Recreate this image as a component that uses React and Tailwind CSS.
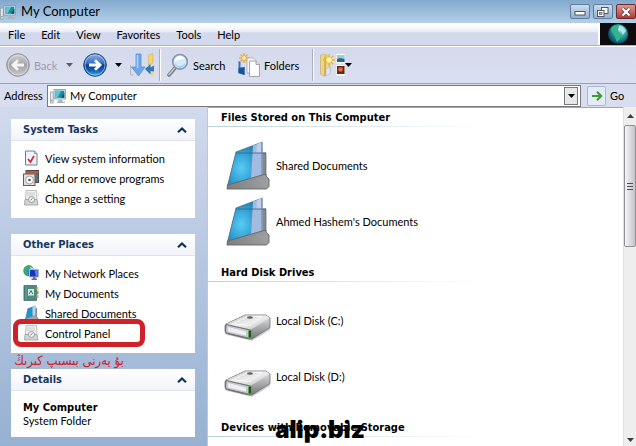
import { useState } from "react";

const menuItems = ["File", "Edit", "View", "Favorites", "Tools", "Help"];

const ComputerIcon = ({ className }) => (
  <svg viewBox="0 0 16 16" className={className} aria-hidden="true">
    <rect x="0.5" y="4" width="2.6" height="11" fill="#e8ecef" stroke="#8c979f" strokeWidth="0.7" />
    <path d="M1.2 12.6h1.2" stroke="#41b649" strokeWidth="1.2" />
    <rect x="4" y="1.5" width="11.5" height="9.5" fill="#dfe7ec" stroke="#8798a3" strokeWidth="0.8" />
    <rect x="5.2" y="2.7" width="9.1" height="7.1" fill="#1b8aa3" />
    <path d="M5.2 2.7h6L7.5 9.8H5.2z" fill="#5cc7d4" />
    <path d="M11 9.8l3.3-5v5z" fill="#0c4f70" />
    <path d="M8.5 11.4h3.4l1 2.4h2v1.2h-8v-1.2h1.2z" fill="#a9b6be" />
  </svg>
);

const Arrow = ({ className }) => (
  <svg viewBox="0 0 7 4" className={className} aria-hidden="true">
    <path d="M0 0h7L3.5 4z" fill="currentColor" />
  </svg>
);

const BackIcon = () => (
  <svg viewBox="0 0 24 24" className="size-6" aria-hidden="true">
    <defs>
      <linearGradient id="backFill" x1="0" y1="0" x2="0" y2="1">
        <stop offset="0" stopColor="#d2d2d4" />
        <stop offset="0.5" stopColor="#a3a3a6" />
        <stop offset="1" stopColor="#c9c9cc" />
      </linearGradient>
    </defs>
    <circle cx="12" cy="12" r="11.3" fill="url(#backFill)" stroke="#8f9093" />
    <circle cx="12" cy="12" r="9.8" fill="none" stroke="#dcdcdf" strokeWidth="0.8" />
    <path d="M18 12H7.5M12 7.2L7 12l5 4.8" fill="none" stroke="#f4f4f6" strokeWidth="2.8" />
  </svg>
);

const ForwardIcon = () => (
  <svg viewBox="0 0 24 24" className="size-6" aria-hidden="true">
    <defs>
      <linearGradient id="forwardFill" x1="0" y1="0" x2="0" y2="1">
        <stop offset="0" stopColor="#8fb4e3" />
        <stop offset="0.42" stopColor="#3a6fc0" />
        <stop offset="0.5" stopColor="#0b3a94" />
        <stop offset="0.75" stopColor="#1560b5" />
        <stop offset="1" stopColor="#38c4ee" />
      </linearGradient>
    </defs>
    <circle cx="12" cy="12" r="11.3" fill="url(#forwardFill)" stroke="#27457c" />
    <circle cx="12" cy="12" r="10" fill="none" stroke="#a9cdf0" strokeWidth="0.7" />
    <path d="M6 12h10.5M12 7.2l5 4.8-5 4.8" fill="none" stroke="#fff" strokeWidth="2.8" />
  </svg>
);

const UpIcon = () => (
  <svg viewBox="0 0 25 24" className="h-6 w-[25px]" aria-hidden="true">
    <path d="M0.5 12v10h3" fill="none" stroke="#b3b6bd" />
    <path d="M18.5 2L23 0.5V10l-4.5 2z" fill="#f1d47c" stroke="#d7b14e" strokeWidth="0.6" />
    <path d="M20 18h3.5v5L20 21z" fill="#f1d47c" />
    <path d="M15 16l5.5-5v3.5l3.5-2v6l-3.5-.5v3.5z" fill="#2f7ab9" />
    <path d="M6 1h5v13h4L8.5 23 1.5 14H6z" fill="#6ea5e6" stroke="#5b90d6" strokeWidth="0.8" />
    <path d="M7.5 2v13" stroke="#b9d8f8" strokeWidth="1.5" />
  </svg>
);

const SearchIcon = () => (
  <svg viewBox="0 0 22 24" className="h-6 w-[22px]" aria-hidden="true">
    <path d="M8 15l-6 7" stroke="#777d86" strokeWidth="3.6" strokeLinecap="round" />
    <path d="M7.6 15l-5.6 6.5" stroke="#c8ccd2" strokeWidth="1.4" strokeLinecap="round" />
    <circle cx="13" cy="8.8" r="7.3" fill="#d4e9fa" stroke="#8796a8" strokeWidth="1.6" />
    <path d="M7.5 8.5a5.6 5.6 0 0 1 10.4-2.6C14.5 6 10 7 7.5 8.5z" fill="#fff" />
    <path d="M8 10.5c3 3.5 7 3.5 10.5-.5-.8 6-9 6.8-10.5.5z" fill="#a5cdf0" />
  </svg>
);

const FoldersIcon = () => (
  <svg viewBox="0 0 22 24" className="h-6 w-[22px]" aria-hidden="true">
    <path d="M0.5 8l2 1v7l4-2v8l-6-2z" fill="#2a78bd" />
    <path d="M0.5 15l6-1v8l-6-2z" fill="#15559c" />
    <path d="M4 5h7v5H4z" fill="#cfd6de" />
    <path d="M6 0v10M1 5h10M2.5 1.5l7 7M9.5 1.5l-7 7" stroke="#efa63f" strokeWidth="1.3" />
    <circle cx="6" cy="5" r="2.3" fill="#fff0a0" stroke="#e7a13c" strokeWidth="0.7" />
    <path d="M9 5h6.5L18 7.5V20H9z" fill="#f7f7f8" stroke="#a6a6aa" strokeWidth="0.8" />
    <path d="M11.5 8H18l3.5 3.5v12h-10z" fill="#fff" stroke="#8f8f93" strokeWidth="0.8" />
    <path d="M18 8v3.5h3.5" fill="#e3e3e6" stroke="#8f8f93" strokeWidth="0.8" />
  </svg>
);

const ViewsIcon = () => (
  <svg viewBox="0 0 25 24" className="h-6 w-[25px]" aria-hidden="true">
    <path d="M0.5 2.5L4 1l6 3v16l-6 3-3.5-2z" fill="#ecd48d" stroke="#c8a456" strokeWidth="0.6" />
    <path d="M4 4l2 1v18l-2 .5z" fill="#d3b059" />
    <path d="M6 16l4-2v7l-4 2z" fill="#dfe8f3" stroke="#9bb0c8" strokeWidth="0.5" />
    <path d="M9 1v12M3 7h12M4.8 2.8l8.4 8.4M13.2 2.8l-8.4 8.4" stroke="#f0b629" strokeWidth="1.3" />
    <circle cx="9" cy="7" r="3" fill="#fff7a8" stroke="#efbf35" strokeWidth="0.6" />
    <rect x="16.5" y="1" width="8" height="9.5" fill="#fff" />
    <rect x="17" y="2" width="7.5" height="7" fill="#8fd0e6" />
    <path d="M17 6l3-1 4.5 1v3H17z" fill="#2c6a7c" />
    <rect x="16.5" y="12" width="8" height="10.5" fill="#fff" />
    <rect x="17" y="13" width="7.5" height="8" fill="#6f2412" />
    <circle cx="20.5" cy="16.5" r="2.3" fill="#d8703a" />
  </svg>
);

const GlobeIcon = () => (
  <svg viewBox="0 0 22 22" className="size-[22px]" aria-hidden="true">
    <defs>
      <radialGradient id="globeFill" cx="0.6" cy="0.35" r="0.65">
        <stop offset="0" stopColor="#7fd9e4" />
        <stop offset="0.6" stopColor="#1c8c8f" />
        <stop offset="1" stopColor="#0b3f63" />
      </radialGradient>
    </defs>
    <circle cx="11" cy="11" r="10" fill="url(#globeFill)" />
    <path d="M5 4c3-3 6-1.5 7 0l-1 4 3 3-1 5-3 3c-2-3-1-5-3-7S3 7 5 4z" fill="#35b58c" />
    <path d="M12 2.5c3 0 6 2.5 7 5.5l-3 4-2-4-3-1z" fill="#c8eef2" opacity="0.8" />
  </svg>
);

const GoIcon = () => (
  <svg viewBox="0 0 12 12" className="size-3" aria-hidden="true">
    <path d="M1 6h9M6 1.8L10.2 6 6 10.2" fill="none" stroke="#3d9a35" strokeWidth="2" />
  </svg>
);

const ChevronUp = () => (
  <svg viewBox="0 0 10 6" className="h-1.5 w-2.5" aria-hidden="true">
    <path d="M1 5.2L5 1.5l4 3.7" fill="none" stroke="#0f3157" strokeWidth="2.2" />
  </svg>
);

const InfoIcon = () => (
  <svg viewBox="0 0 16 16" className="size-4" aria-hidden="true">
    <path d="M2.5 1h9L14 3.5V15H2.5z" fill="#edf3fa" stroke="#6580a3" />
    <path d="M11.5 1v2.5H14" fill="#b6c8dd" stroke="#6580a3" strokeWidth="0.7" />
    <path d="M5 9l2.5 3L11 6" fill="none" stroke="#cf2a2d" strokeWidth="1.7" />
  </svg>
);

const ProgramsIcon = () => (
  <svg viewBox="0 0 16 16" className="size-4" aria-hidden="true">
    <rect x="3" y="0.5" width="12.5" height="12" fill="#8d8378" stroke="#4f4a48" />
    <path d="M3 2h12.5" stroke="#c54d3a" strokeWidth="1.5" />
    <path d="M12.5 3H15v9h-2.5z" fill="#5b6c86" />
    <rect x="0.5" y="4" width="11.5" height="11.5" fill="#e1e2df" stroke="#605d58" />
    <circle cx="6.5" cy="10" r="4" fill="#fafafa" stroke="#8b8b86" strokeWidth="0.8" />
    <circle cx="6.5" cy="10" r="1.3" fill="#4e5156" />
  </svg>
);

const SettingIcon = () => (
  <svg viewBox="0 0 16 16" className="size-4" aria-hidden="true">
    <path d="M3 0.5h10.5l.5 9H2.5z" fill="#f1f1f1" stroke="#b0b1b4" strokeWidth="0.8" />
    <path d="M4.5 3h8M4.5 5h8" stroke="#a3a5a8" strokeDasharray="1 1" />
    <path d="M2 9.5h12l1 5.5H1.5z" fill="#d3d4d6" stroke="#9a9c9f" strokeWidth="0.8" />
    <circle cx="8.5" cy="9.5" r="3" fill="#f6f6f6" stroke="#8a8c90" strokeWidth="0.9" />
    <path d="M7.5 10l2-1.5" stroke="#67696d" />
  </svg>
);

const NetworkIcon = () => (
  <svg viewBox="0 0 16 16" className="size-4" aria-hidden="true">
    <circle cx="5.8" cy="5.8" r="5.5" fill="#2b8fb4" />
    <path d="M2 2c3-2.5 5-2 6-1L6.5 4 3 5.5l2 3-1 2C1 9 0 5 2 2z" fill="#42a965" />
    <path d="M7 2l3 1 .5 2H8z" fill="#bfe6ea" />
    <rect x="6.5" y="4.5" width="9" height="7.5" fill="#1a34b8" stroke="#b5bfca" strokeWidth="0.9" />
    <path d="M11.5 5.2l3.3-.1v6h-2z" fill="#5b83ea" />
    <path d="M10 12h2.5v1.5H14V15H8.5v-1.5H10z" fill="#66717c" />
  </svg>
);

const NotebookIcon = () => (
  <svg viewBox="0 0 16 16" className="size-4" aria-hidden="true">
    <rect x="1" y="0.7" width="12.5" height="14.6" fill="#4f8b83" stroke="#2c5f5b" strokeWidth="0.8" />
    <path d="M3 1v14" stroke="#6aa59e" strokeWidth="0.9" />
    <rect x="5" y="4" width="6" height="6.5" fill="#d7e9dd" />
    <path d="M6.2 9L8 5.5 9.8 9" fill="none" stroke="#34766f" />
    <path d="M13.5 2h2v3h-2z" fill="#e4c653" />
    <path d="M13.5 6h2v3h-2z" fill="#5fae5b" />
    <path d="M13.5 10h2v3h-2z" fill="#d5b24a" />
  </svg>
);

const SharedIcon = () => (
  <svg viewBox="0 0 16 16" className="size-4" aria-hidden="true">
    <path d="M12 3h2v9l1 1v2.5H2z" fill="#84898f" />
    <path d="M4.5 3.5l8-3v11L2 15z" fill="#2691c9" />
    <path d="M9.5 1.8l3-1.3v11l-3 1z" fill="#b7d5ec" />
    <path d="M2 13.5l10.5-3L15 13v2.5H2z" fill="#a2a6aa" stroke="#74787c" strokeWidth="0.5" />
  </svg>
);

const FolderIcon = () => (
  <svg viewBox="0 0 48 52" className="h-[52px] w-12" aria-hidden="true">
    <defs>
      <radialGradient id="folderBlue" cx="0.4" cy="0.6" r="0.65">
        <stop offset="0" stopColor="#58cdf4" />
        <stop offset="0.6" stopColor="#2f9bd0" />
        <stop offset="1" stopColor="#1f76a8" />
      </radialGradient>
      <linearGradient id="folderGrey" x1="0" y1="0" x2="1" y2="0">
        <stop offset="0" stopColor="#7c7e80" />
        <stop offset="1" stopColor="#9fa0a1" />
      </linearGradient>
    </defs>
    <path d="M34 14h8v23l-8 2z" fill="#86888a" stroke="#5e6062" strokeWidth="0.7" />
    <path d="M12 13L38.5 3v34L3.5 47z" fill="url(#folderBlue)" stroke="#47677f" strokeWidth="0.8" />
    <path d="M29 6.6L38.5 3v34L27 40.2z" fill="#a4bbdf" />
    <path d="M33 5l5.5-2v11h-6z" fill="#c3cfe8" />
    <path d="M37 3.6l1.5-.6v34l-1.5.4z" fill="#8d9db6" />
    <path d="M12 14h30" stroke="#3f6a88" strokeWidth="0.9" />
    <path d="M3.5 46L40 35.5h2V37l3 3v7.5L42.5 50H3z" fill="url(#folderGrey)" stroke="#626466" strokeWidth="0.9" />
  </svg>
);

const DriveIcon = () => (
  <svg viewBox="0 0 48 52" className="h-[52px] w-12" aria-hidden="true">
    <defs>
      <linearGradient id="driveTop" x1="0" y1="0" x2="1" y2="1">
        <stop offset="0" stopColor="#c0c1c2" />
        <stop offset="0.5" stopColor="#ededed" />
        <stop offset="1" stopColor="#bcbdbe" />
      </linearGradient>
      <linearGradient id="driveSide" x1="0" y1="0" x2="0" y2="1">
        <stop offset="0" stopColor="#e5e6e6" />
        <stop offset="1" stopColor="#727476" />
      </linearGradient>
    </defs>
    <path d="M2 39l24 6 20-11v2L28 47 4 41z" fill="#b9babb" opacity="0.7" />
    <path d="M2 30l19-9h21l4 3v9.5L28 45h-3L2 39.5 1 37v-5z" fill="url(#driveSide)" stroke="#6b6d6f" strokeWidth="0.8" />
    <path d="M2.5 30L21 21.5h21l3.5 2.5L27 35.5z" fill="url(#driveTop)" />
    <path d="M8 30l16-7.5h14l-12 9z" fill="none" stroke="#fff" strokeWidth="0.7" />
    <ellipse cx="26" cy="23.5" rx="3" ry="1.3" fill="#606365" />
    <path d="M2 30.5L26 36v8.5L2.5 39l-1-2z" fill="#c6c7cb" stroke="#686a6c" strokeWidth="0.9" />
    <path d="M4 33l18 4.5v4l-18-4z" fill="#eeeef6" />
    <path d="M24.5 36.5l3-.5v7.5l-3 1z" fill="#2a4b28" stroke="#5fae50" strokeWidth="0.9" />
  </svg>
);

const systemTasks = [
  { label: "View system information", icon: InfoIcon },
  { label: "Add or remove programs", icon: ProgramsIcon },
  { label: "Change a setting", icon: SettingIcon },
];

const otherPlaces = [
  { label: "My Network Places", icon: NetworkIcon },
  { label: "My Documents", icon: NotebookIcon },
  { label: "Shared Documents", icon: SharedIcon },
  { label: "Control Panel", icon: SettingIcon, marked: true },
];

const sections = [
  {
    title: "Files Stored on This Computer",
    icon: FolderIcon,
    items: ["Shared Documents", "Ahmed Hashem's Documents"],
  },
  {
    title: "Hard Disk Drives",
    icon: DriveIcon,
    items: ["Local Disk (C:)", "Local Disk (D:)"],
  },
];

const Panel = ({ title, children }) => {
  const [open, setOpen] = useState(true);

  return (
    <section className="bg-white">
      <h2>
        <button
          type="button"
          aria-expanded={open}
          onClick={() => setOpen(!open)}
          className="flex h-[22px] w-full items-center justify-between border-b border-[#dfe5ef] bg-linear-to-b from-white to-[#f1f3f8] pr-2 pl-3 font-['DejaVu_Sans_Condensed','DejaVu_Sans',sans-serif] font-bold text-[#17365d]"
        >
          {title}
          <ChevronUp />
        </button>
      </h2>
      {open && children}
    </section>
  );
};

const TaskList = ({ items }) => (
  <ul className="px-3 pt-[7px] pb-2.5">
    {items.map(({ label, icon: Icon, marked }) => (
      <li key={label} className="relative">
        <a href="#" className="flex h-5 items-center gap-1.5 whitespace-nowrap">
          <Icon />
          {label}
        </a>
        {marked && (
          <span className="pointer-events-none absolute -top-1 -left-2.5 h-7 w-[132px] rounded-lg border-5 border-[#cf2228]" />
        )}
      </li>
    ))}
  </ul>
);

const SectionTitle = ({ children }) => (
  <div>
    <h2 className="flex h-[18px] items-center pl-[13px] font-['DejaVu_Sans_Condensed','DejaVu_Sans',sans-serif] font-bold whitespace-nowrap">
      {children}
    </h2>
    <div className="h-px w-2/3 bg-linear-to-r from-[#b9d3dc] to-white" />
  </div>
);

const Separator = () => (
  <div className="h-8 w-0.5 shrink-0 border-r border-l border-r-white border-l-[#a9adbd]" />
);

const App = () => {
  const [address, setAddress] = useState("My Computer");

  return (
    <div className="relative flex min-h-screen flex-col overflow-hidden bg-[#d8ddef] font-['Lato',sans-serif] text-[11px] leading-[13px] text-black">
      {/* Title bar */}
      <header className="flex h-[23px] items-center bg-linear-to-b from-[#83a8ce] to-[#b4cfe8]">
        <ComputerIcon className="size-4 shrink-0" />
        <h1 className="ml-[5px] flex-1 text-[13px]">My Computer</h1>
        <div className="flex gap-[3px]">
          <button
            type="button"
            aria-label="Minimize"
            className="flex h-[15px] w-5 items-center justify-center rounded-xs border border-[#5f7c9c] bg-linear-to-b from-[#cbdcee] to-[#94b1d0]"
          >
            <svg viewBox="0 0 12 10" className="h-2.5 w-3" aria-hidden="true">
              <rect x="1" y="4.5" width="10" height="3.5" fill="#fff" stroke="#50565f" />
            </svg>
          </button>
          <button
            type="button"
            aria-label="Restore"
            className="flex h-[15px] w-5 items-center justify-center rounded-xs border border-[#5f7c9c] bg-linear-to-b from-[#cbdcee] to-[#94b1d0]"
          >
            <svg viewBox="0 0 12 10" className="h-2.5 w-3" aria-hidden="true">
              <rect x="4.5" y="0.5" width="6.5" height="6" fill="#fff" stroke="#50565f" />
              <rect x="0.5" y="3.5" width="6.5" height="6" fill="#fff" stroke="#50565f" />
              <rect x="2.5" y="5.5" width="2.5" height="2" fill="#b6cbe1" stroke="#50565f" strokeWidth="0.7" />
            </svg>
          </button>
          <button
            type="button"
            aria-label="Close"
            className="flex h-[15px] w-5 items-center justify-center rounded-xs border border-[#6b2a2c] bg-linear-to-b from-[#dc9a92] to-[#b03a36]"
          >
            <svg viewBox="0 0 12 10" className="h-2.5 w-3" aria-hidden="true">
              <path d="M2.5 1.5l7 7M9.5 1.5l-7 7" stroke="#5c3438" strokeWidth="3.8" />
              <path d="M2.5 1.5l7 7M9.5 1.5l-7 7" stroke="#fff" strokeWidth="2.3" />
            </svg>
          </button>
        </div>
      </header>

      {/* Menu bar */}
      <nav className="flex h-[23px] border-b border-[#aeb2c2] bg-linear-to-b from-white from-10% via-[#e9ecf7] via-40% to-[#d3d9ec] to-45%">
        <ul className="flex flex-1 items-center gap-4 pl-2">
          {menuItems.map((item) => (
            <li key={item}>
              <button type="button">{item}</button>
            </li>
          ))}
        </ul>
        <div className="flex w-[38px] justify-center border-l-2 border-white bg-[#0d0d10]">
          <GlobeIcon />
        </div>
      </nav>

      {/* Toolbar */}
      <div className="flex h-[38px] items-center border-t border-b border-t-white border-b-[#9ea1ad] bg-linear-to-b from-[#d4d9eb] to-[#dbe0f1] pl-1.5 whitespace-nowrap">
        <button type="button" className="flex items-center gap-1 text-[#9c9da4]">
          <BackIcon />
          <span className="w-6 text-left">Back</span>
          <Arrow className="ml-1 h-1 w-[7px] text-[#5c5d63]" />
        </button>
        <button type="button" aria-label="Forward" className="ml-2.5 flex items-center gap-2">
          <ForwardIcon />
          <Arrow className="h-1 w-[7px]" />
        </button>
        <button type="button" aria-label="Up" className="mr-1 ml-2">
          <UpIcon />
        </button>
        <Separator />
        <button type="button" className="ml-1.5 flex items-center gap-1">
          <SearchIcon />
          <span className="w-[45px] text-left">Search</span>
        </button>
        <button type="button" className="flex items-center gap-1">
          <FoldersIcon />
          <span className="w-12 text-left">Folders</span>
        </button>
        <Separator />
        <button type="button" aria-label="Views" className="ml-1.5 flex items-center">
          <ViewsIcon />
          <Arrow className="h-1 w-[7px]" />
        </button>
      </div>

      {/* Address bar */}
      <div className="flex h-[23px] items-center pl-1">
        <label htmlFor="address" className="w-[43px]">
          Address
        </label>
        <div className="flex h-[22px] flex-1 items-center border border-[#77797f] bg-white pr-0.5 pl-0.5">
          <ComputerIcon className="size-4 shrink-0" />
          <input
            id="address"
            type="text"
            value={address}
            onChange={(e) => setAddress(e.target.value)}
            className="ml-1 min-w-0 flex-1 bg-transparent focus:outline-none"
          />
          <button
            type="button"
            aria-label="Show addresses"
            className="flex h-[18px] w-3.5 items-center justify-center border border-[#77797f] bg-[#e7e8ea]"
          >
            <Arrow className="h-1 w-[7px]" />
          </button>
        </div>
        <button type="button" className="ml-1.5 flex w-[49px] items-center gap-1">
          <span className="flex h-5 w-[19px] items-center justify-center rounded-xs border border-[#a9b9cf] bg-[#e4eaf6]">
            <GoIcon />
          </span>
          Go
        </button>
      </div>

      <div className="flex flex-1">
        {/* Task pane */}
        <aside className="flex w-[208px] shrink-0 flex-col gap-4 border-r border-[#b9c9e0] bg-linear-to-b from-[#d2daed] to-[#96b1d2] pt-3 pr-3 pl-[11px]">
          <Panel title="System Tasks">
            <TaskList items={systemTasks} />
          </Panel>
          <div className="relative">
            <Panel title="Other Places">
              <TaskList items={otherPlaces} />
            </Panel>
            <p
              dir="rtl"
              lang="ug"
              className="absolute top-full left-0 w-[116px] text-center font-['DejaVu_Sans_Condensed','DejaVu_Sans',sans-serif] text-[13px] leading-4 whitespace-nowrap text-[#cf2228]"
            >
              بۇ يەرنى بىسىپ كىرىڭ
            </p>
          </div>
          <Panel title="Details">
            <div className="px-3 py-2.5">
              <p className="font-['DejaVu_Sans_Condensed','DejaVu_Sans',sans-serif] font-bold">
                My Computer
              </p>
              <p>System Folder</p>
            </div>
          </Panel>
        </aside>

        {/* Files */}
        <main className="min-w-0 flex-1 border-t border-[#a3a6ad] bg-white">
          {sections.map(({ title, icon: Icon, items }) => (
            <section key={title} className="pb-3.5">
              <SectionTitle>{title}</SectionTitle>
              <ul className="pt-2.5 pl-4">
                {items.map((item) => (
                  <li key={item}>
                    <a href="#" className="flex h-14 items-center gap-1">
                      <Icon />
                      {item}
                    </a>
                  </li>
                ))}
              </ul>
            </section>
          ))}
          <SectionTitle>Devices with Removable Storage</SectionTitle>
        </main>

        {/* Scroll bar */}
        <div className="flex w-[13px] shrink-0 flex-col items-center border-l border-[#dedfe1] bg-[#eeeeef] text-[#3c3c3f]">
          <button type="button" aria-label="Scroll up" className="flex h-[18px] items-center">
            <Arrow className="h-1 w-[7px] rotate-180" />
          </button>
          <div className="flex h-[122px] w-full flex-col items-center justify-center gap-0.5 rounded-xs border border-[#8f9095] bg-linear-to-r from-[#f5f5f6] to-[#c3c4ca]">
            <span className="h-px w-1.5 bg-[#4b4c50]" />
            <span className="h-px w-1.5 bg-[#4b4c50]" />
            <span className="h-px w-1.5 bg-[#4b4c50]" />
          </div>
          <button type="button" aria-label="Scroll down" className="mt-auto flex h-3 items-center">
            <Arrow className="h-1 w-[7px]" />
          </button>
        </div>
      </div>

      {/* Watermark */}
      <p className="pointer-events-none absolute inset-x-0 bottom-1 pl-1 text-center font-['Inter',sans-serif] text-2xl leading-6 font-black">
        alip.biz
      </p>
    </div>
  );
};

export default App;
